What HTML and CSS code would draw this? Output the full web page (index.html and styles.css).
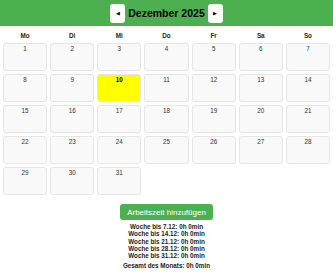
FILE: index.html
```html
<!DOCTYPE html>
<html lang="de">
<head>
    <meta charset="UTF-8">
    <meta name="viewport" content="width=device-width, initial-scale=1.0">
    <title>Arbeitszeit Kalender</title>
    <link rel="stylesheet" href="styles.css">
</head>
<body>
    <div class="header">
        <button class="nav-button" id="prev-month">&#9664;</button>
        <span class="month-title">Dezember 2025</span>
        <button class="nav-button" id="next-month">&#9654;</button>
    </div>

    <div class="calendar">
        <div class="weekday">Mo</div>
        <div class="weekday">Di</div>
        <div class="weekday">Mi</div>
        <div class="weekday">Do</div>
        <div class="weekday">Fr</div>
        <div class="weekday">Sa</div>
        <div class="weekday">So</div>

        <div class="day">1</div>
        <div class="day">2</div>
        <div class="day">3</div>
        <div class="day">4</div>
        <div class="day">5</div>
        <div class="day">6</div>
        <div class="day">7</div>
        <div class="day">8</div>
        <div class="day">9</div>
        <div class="day today">10</div>
        <div class="day">11</div>
        <div class="day">12</div>
        <div class="day">13</div>
        <div class="day">14</div>
        <div class="day">15</div>
        <div class="day">16</div>
        <div class="day">17</div>
        <div class="day">18</div>
        <div class="day">19</div>
        <div class="day">20</div>
        <div class="day">21</div>
        <div class="day">22</div>
        <div class="day">23</div>
        <div class="day">24</div>
        <div class="day">25</div>
        <div class="day">26</div>
        <div class="day">27</div>
        <div class="day">28</div>
        <div class="day">29</div>
        <div class="day">30</div>
        <div class="day">31</div>
    </div>

    <div class="summary">
        <button class="add-button">Arbeitszeit hinzufügen</button>
        <div class="weeks">
            <p>Woche bis 7.12: 0h 0min</p>
            <p>Woche bis 14.12: 0h 0min</p>
            <p>Woche bis 21.12: 0h 0min</p>
            <p>Woche bis 28.12: 0h 0min</p>
            <p>Woche bis 31.12: 0h 0min</p>
        </div>
        <p class="month-total">Gesamt des Monats: 0h 0min</p>
    </div>
</body>
</html>
```

FILE: styles.css
```css
* {
    margin: 0;
    padding: 0;
    box-sizing: border-box;
    font-family: "Liberation Sans", Arial, sans-serif;
}

body {
    background-color: #FFFFFF;
    color: #222222;
}

.header {
    background-color: #4CAF50;
    height: 26px;
    display: flex;
    justify-content: center;
    align-items: center;
    gap: 3px;
}

.nav-button {
    width: 15px;
    height: 19px;
    background-color: #FFFFFF;
    border: none;
    border-radius: 3px;
    color: #000000;
    font-size: 5px;
    cursor: pointer;
}

.month-title {
    font-size: 10.5px;
    font-weight: bold;
    color: #000000;
}

.calendar {
    display: grid;
    grid-template-columns: repeat(7, 1fr);
    grid-auto-rows: 28px;
    grid-template-rows: 7.5px;
    gap: 3px;
    padding: 6px 3px 0;
}

.weekday {
    font-size: 6.3px;
    font-weight: bold;
    line-height: 7.5px;
    text-align: center;
    color: #222222;
}

.day {
    background-color: #F9F9F9;
    border: 1px solid #E6E6E6;
    border-radius: 3px;
    font-size: 6.3px;
    line-height: 7px;
    text-align: center;
    padding-top: 1.5px;
    color: #333333;
}

.day.today {
    background-color: #FFFF00;
    font-weight: bold;
    color: #000000;
}

.summary {
    display: flex;
    flex-direction: column;
    align-items: center;
    padding-top: 9.5px;
}

.add-button {
    background-color: #4CAF50;
    color: #FFFFFF;
    border: none;
    border-radius: 3px;
    font-size: 8px;
    height: 16px;
    padding: 0 7px;
    cursor: pointer;
}

.weeks {
    margin-top: 3px;
    text-align: center;
}

.weeks p, .month-total {
    font-size: 6.3px;
    font-weight: bold;
    line-height: 7.25px;
    color: #222222;
}

.month-total {
    margin-top: 2.75px;
}
```
